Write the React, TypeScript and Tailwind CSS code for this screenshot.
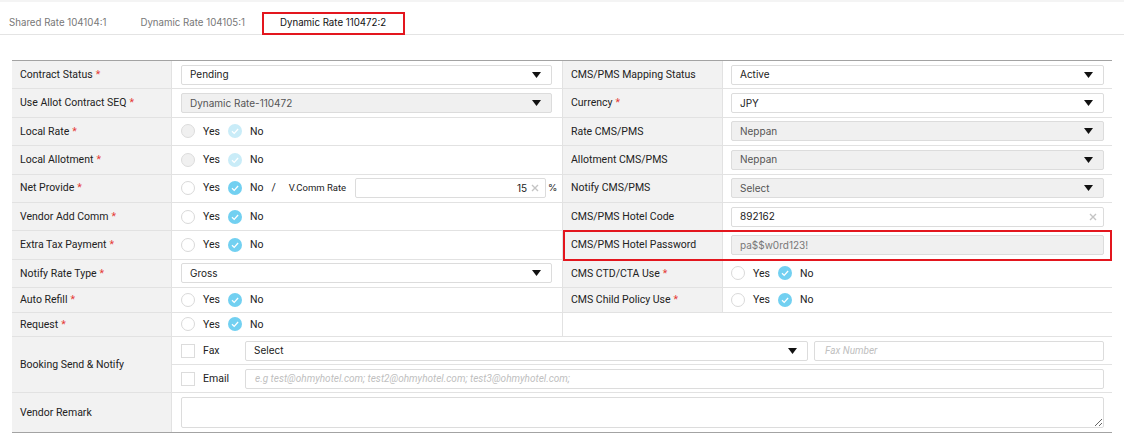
import React from "react";

const LBL = "font-['Roboto','Liberation_Sans',sans-serif] text-[10.5px] text-[#222]";

function Req() {
  return <span className="text-[#e53935] ml-[3px]">*</span>;
}

function Tri() {
  return (
    <svg width="9" height="6" viewBox="0 0 9 6" className="shrink-0">
      <polygon points="0,0 9,0 4.5,6" fill="#111" />
    </svg>
  );
}

function XIcon() {
  return (
    <svg width="8" height="8" viewBox="0 0 8 8" className="shrink-0">
      <path d="M1 1 L7 7 M7 1 L1 7" stroke="#c4c4c4" strokeWidth="1.4" />
    </svg>
  );
}

function Radio({ checked, disabled }: { checked?: boolean; disabled?: boolean }) {
  if (checked) {
    return (
      <span
        className={
          disabled
            ? "w-[14px] h-[14px] rounded-full bg-[#c9ecf8] flex items-center justify-center shrink-0"
            : "w-[14px] h-[14px] rounded-full bg-[#72d0f1] flex items-center justify-center shrink-0"
        }
      >
        <svg width="14" height="14" viewBox="0 0 14 14">
          <polyline points="4,7.3 6.2,9.4 10.1,5" fill="none" stroke="#fff" strokeWidth="1.3" />
        </svg>
      </span>
    );
  }
  return (
    <span
      className={
        disabled
          ? "w-[14px] h-[14px] rounded-full border border-[#dcdcdc] bg-[#f0f0f0] shrink-0"
          : "w-[14px] h-[14px] rounded-full border border-[#d9d9d9] bg-white shrink-0"
      }
    />
  );
}

function YesNo({ disabled }: { disabled?: boolean }) {
  return (
    <div className={"flex items-center shrink-0 whitespace-nowrap " + LBL}>
      <Radio disabled={disabled} />
      <span className="ml-[8px]">Yes</span>
      <span className="ml-[8px]">
        <Radio checked disabled={disabled} />
      </span>
      <span className="ml-[8px]">No</span>
    </div>
  );
}

function Select({ value, disabled, className }: { value: string; disabled?: boolean; className?: string }) {
  return (
    <div
      className={
        (disabled ? "bg-[#f0f0f0] text-[#555] " : "bg-white text-[#222] ") +
        "h-[20px] border border-[#dcdcdc] rounded-[2px] flex items-center justify-between pl-[8px] pr-[10px] text-[10px] shrink-0 " +
        (className ?? "w-full")
      }
    >
      <span>{value}</span>
      <Tri />
    </div>
  );
}

function TextBox({ value, disabled, clear }: { value: string; disabled?: boolean; clear?: boolean }) {
  return (
    <div
      className={
        (disabled ? "bg-[#f0f0f0] text-[#777] " : "bg-white text-[#222] ") +
        "w-full h-[20px] border border-[#dcdcdc] rounded-[2px] flex items-center justify-between pl-[8px] pr-[6px] text-[10px]"
      }
    >
      <span>{value}</span>
      {clear ? <XIcon /> : null}
    </div>
  );
}

function Label({ text, req }: { text: string; req?: boolean }) {
  return (
    <div className={"bg-[#f2f2f2] flex items-center pl-[8px] border-r border-[#e2e2e2] " + LBL}>
      <span>{text}</span>
      {req ? <Req /> : null}
    </div>
  );
}

function Half({
  label,
  req,
  children,
  side,
}: {
  label?: string;
  req?: boolean;
  children?: React.ReactNode;
  side: "l" | "r";
}) {
  return (
    <div
      className={
        side === "l"
          ? "w-[551px] shrink-0 grid grid-cols-[160px_1fr] border-r border-[#e2e2e2]"
          : "flex-1 grid grid-cols-[160px_1fr]"
      }
    >
      {label !== undefined ? <Label text={label} req={req} /> : <div />}
      <div
        className={
          side === "l"
            ? "flex items-center pl-[9px] pr-[10px] whitespace-nowrap"
            : "flex items-center pl-[8px] pr-[8px] whitespace-nowrap"
        }
      >
        {children}
      </div>
    </div>
  );
}

function Row({ children, h }: { children: React.ReactNode; h: string }) {
  return <div className={"flex border-b border-[#e2e2e2] " + h}>{children}</div>;
}

export default function App() {
  return (
    <div className="w-[1124px] min-h-[439px] bg-white font-['Inter','Liberation_Sans',sans-serif]">
      <div className="h-[2px] bg-[#f4f4f4]" />
      <div className="h-[33px] border-b border-[#e4e4e4] flex items-end text-[9.7px] whitespace-nowrap">
        <div className="h-[22px] flex items-center pl-[9px] pr-[17px] text-[#777]">Shared Rate 104104:1</div>
        <div className="h-[22px] flex items-center px-[17px] text-[#777]">Dynamic Rate 104105:1</div>
        <div className="h-[23px] flex items-center pl-[16px] pr-[17px] text-[#111] border-2 border-[#e3161e] mb-[-1px]">
          Dynamic Rate 110472:2
        </div>
      </div>

      <div className="mx-[12px] mt-[25px] border-t border-[#a3a3a3]">
        <Row h="h-[28.4px]">
          <Half side="l" label="Contract Status" req>
            <Select value="Pending" />
          </Half>
          <Half side="r" label="CMS/PMS Mapping Status">
            <Select value="Active" />
          </Half>
        </Row>
        <Row h="h-[28.4px]">
          <Half side="l" label="Use Allot Contract SEQ" req>
            <Select value="Dynamic Rate-110472" disabled />
          </Half>
          <Half side="r" label="Currency" req>
            <Select value="JPY" />
          </Half>
        </Row>
        <Row h="h-[28.4px]">
          <Half side="l" label="Local Rate" req>
            <YesNo disabled />
          </Half>
          <Half side="r" label="Rate CMS/PMS">
            <Select value="Neppan" disabled />
          </Half>
        </Row>
        <Row h="h-[28.4px]">
          <Half side="l" label="Local Allotment" req>
            <YesNo disabled />
          </Half>
          <Half side="r" label="Allotment CMS/PMS">
            <Select value="Neppan" disabled />
          </Half>
        </Row>
        <Row h="h-[28.4px]">
          <Half side="l" label="Net Provide" req>
            <YesNo />
            <span className={"ml-[8px] " + LBL}>/</span>
            <span className="ml-[13px] font-['Roboto','Liberation_Sans',sans-serif] text-[9.5px] text-[#222]">
              V.Comm Rate
            </span>
            <div className="ml-[9px] w-[191px] shrink-0 h-[20px] border border-[#dcdcdc] rounded-[2px] flex items-center justify-end pr-[6px] text-[10px] text-[#222]">
              <span className="mr-[4px]">15</span>
              <XIcon />
            </div>
            <span className="ml-[2px] text-[9.5px] text-[#222]">%</span>
          </Half>
          <Half side="r" label="Notify CMS/PMS">
            <Select value="Select" disabled />
          </Half>
        </Row>
        <Row h="h-[28.4px]">
          <Half side="l" label="Vendor Add Comm" req>
            <YesNo />
          </Half>
          <Half side="r" label="CMS/PMS Hotel Code">
            <TextBox value="892162" clear />
          </Half>
        </Row>
        <Row h="h-[28.4px]">
          <Half side="l" label="Extra Tax Payment" req>
            <YesNo />
          </Half>
          <div className="flex-1 relative flex">
            <Half side="r" label="CMS/PMS Hotel Password">
              <TextBox value="pa$$w0rd123!" disabled />
            </Half>
            <div className="absolute left-0 right-0 top-[-1px] bottom-[-2px] border-2 border-[#e3161e] pointer-events-none" />
          </div>
        </Row>
        <Row h="h-[28.4px]">
          <Half side="l" label="Notify Rate Type" req>
            <Select value="Gross" />
          </Half>
          <Half side="r" label="CMS CTD/CTA Use" req>
            <YesNo />
          </Half>
        </Row>
        <Row h="h-[24.5px]">
          <Half side="l" label="Auto Refill" req>
            <YesNo />
          </Half>
          <Half side="r" label="CMS Child Policy Use" req>
            <YesNo />
          </Half>
        </Row>
        <Row h="h-[24.5px]">
          <Half side="l" label="Request" req>
            <YesNo />
          </Half>
          <div className="flex-1" />
        </Row>

        <div className="flex border-b border-[#e2e2e2] h-[56px]">
          <div className="w-[160px] shrink-0 grid">
            <Label text="Booking Send & Notify" />
          </div>
          <div className="flex-1 flex flex-col">
            <div className="h-[28px] border-b border-[#e2e2e2] flex items-center pl-[9px] pr-[8px] text-[10px]">
              <span className="w-[14px] h-[14px] border border-[#dcdcdc] bg-white shrink-0" />
              <span className={"ml-[8px] w-[42px] " + LBL}>Fax</span>
              <Select value="Select" className="w-[563px]" />
              <div className="ml-[6px] flex-1 h-[20px] border border-[#dcdcdc] rounded-[2px] flex items-center pl-[10px] italic text-[#c0c0c0] font-['Roboto','Liberation_Sans',sans-serif]">
                Fax Number
              </div>
            </div>
            <div className="flex-1 flex items-center pl-[9px] pr-[8px] text-[10px]">
              <span className="w-[14px] h-[14px] border border-[#dcdcdc] bg-white shrink-0" />
              <span className={"ml-[8px] w-[42px] " + LBL}>Email</span>
              <div className="flex-1 h-[20px] border border-[#dcdcdc] rounded-[2px] flex items-center pl-[9px] italic text-[#c0c0c0] font-['Roboto','Liberation_Sans',sans-serif]">
                e.g test@ohmyhotel.com; test2@ohmyhotel.com; test3@ohmyhotel.com;
              </div>
            </div>
          </div>
        </div>

        <div className="flex border-b border-[#a3a3a3] h-[40px]">
          <div className="w-[160px] shrink-0 grid">
            <Label text="Vendor Remark" />
          </div>
          <div className="flex-1 flex items-center pl-[9px] pr-[8px]">
            <textarea className="w-full h-[31px] border border-[#dcdcdc] rounded-[2px] resize-y outline-none block" />
          </div>
        </div>
      </div>
    </div>
  );
}
